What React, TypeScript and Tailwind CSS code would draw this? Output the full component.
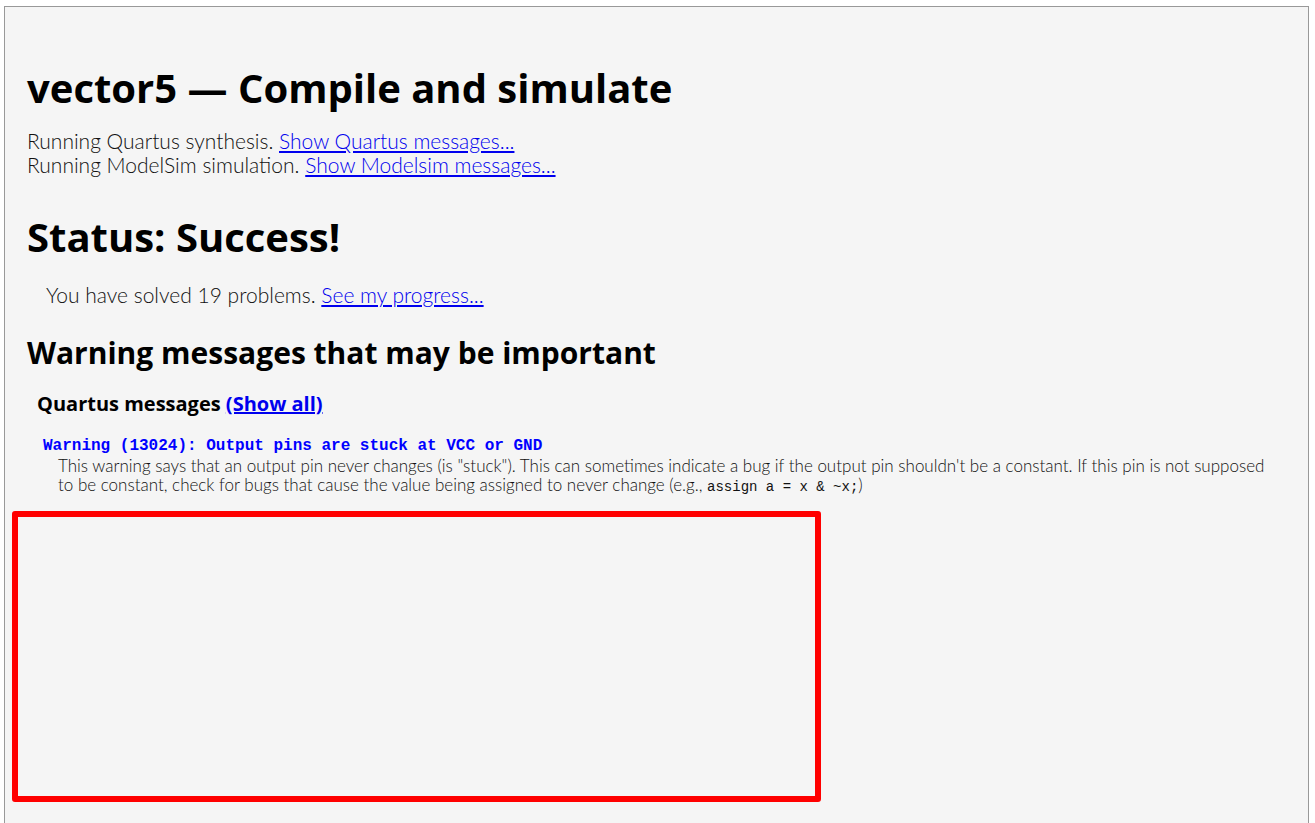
export default function App() {
  const body = "font-['Lato','Open_Sans',sans-serif]";
  const head = "font-['Open_Sans',sans-serif] font-bold";
  return (
    <div className="min-h-[823px] bg-white pl-[4px] pr-[6px] pt-[6px]">
      <div className="min-h-[817px] border border-b-0 border-[#999] bg-[#f5f5f5] px-[22px] pt-[52px] text-black">
        <h1 className={`${head} text-[40px] leading-[58px]`}>vector5 — Compile and simulate</h1>
        <div className={`${body} mt-[12px] text-[21px] leading-[24px] font-light text-[#111]`}>
          <div>
            Running Quartus synthesis. <a className="text-[#0000ee] underline">Show Quartus messages...</a>
          </div>
          <div>
            Running ModelSim simulation. <a className="text-[#0000ee] underline">Show Modelsim messages...</a>
          </div>
        </div>

        <h2 className={`${head} mt-[32px] text-[40px] leading-[56px]`}>Status: Success!</h2>
        <p className={`${body} mt-[18px] ml-[19px] text-[21px] leading-[24px] font-light text-[#111]`}>
          You have solved 19 problems. <a className="text-[#0000ee] underline">See my progress...</a>
        </p>

        <h3 className={`${head} mt-[26px] text-[30px] leading-[40px]`}>Warning messages that may be important</h3>
        <h4 className={`${head} mt-[17px] ml-[10px] text-[20px] leading-[28px]`}>
          Quartus messages <a className="text-[#0000ee] underline">(Show all)</a>
        </h4>

        <div className="mt-[18px] ml-[16px]">
          <div className="font-['Liberation_Mono',monospace] text-[16px] font-bold leading-[20px] text-[#0000ff]">
            Warning (13024): Output pins are stuck at VCC or GND
          </div>
          <p className={`${body} ml-[15px] pr-[16px] text-[17px] leading-[19px] font-light text-[#111]`}>
            This warning says that an output pin never changes (is "stuck"). This can sometimes indicate a bug if the output
            pin shouldn't be a constant. If this pin is not supposed to be constant, check for bugs that cause the value
            being assigned to never change (e.g.,{" "}
            <code className="font-['Liberation_Mono',monospace] text-[14px] leading-[19px] font-normal">assign a = x &amp; ~x;</code>)
          </p>
        </div>

        <div className="mt-[14px] ml-[-15px] h-[291px] w-[809px] rounded-[3px] border-[6px] border-[#ff0000]" />
      </div>
    </div>
  );
}
